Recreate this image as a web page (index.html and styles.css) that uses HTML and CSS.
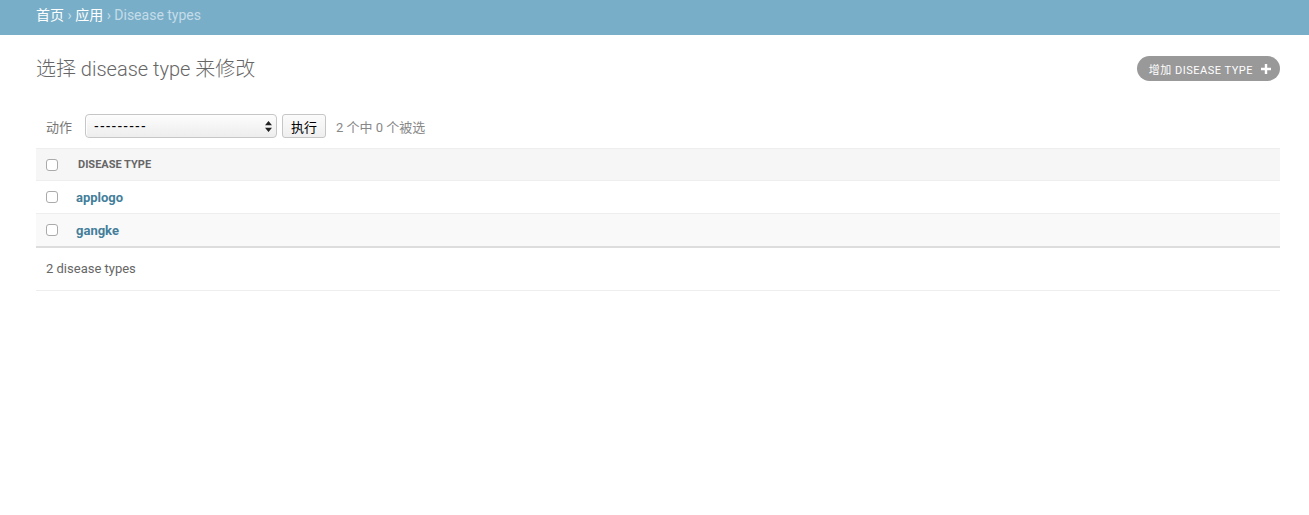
FILE: index.html
```html
<!DOCTYPE html>
<html lang="zh-hans">
<head>
    <meta charset="UTF-8">
    <title>选择 disease type 来修改</title>
    <link rel="stylesheet" href="styles.css">
</head>
<body>
    <div class="breadcrumbs">
        <a href="#">首页</a> &rsaquo; <a href="#">应用</a> &rsaquo; Disease types
    </div>

    <div class="content">
        <div class="page-head">
            <h1>选择 disease type 来修改</h1>
            <a href="#" class="addlink">增加 disease type
                <svg width="10" height="10" viewBox="0 0 10 10"><path d="M3.8 0h2.4v3.8H10v2.4H6.2V10H3.8V6.2H0V3.8h3.8z" fill="#fff"/></svg>
            </a>
        </div>

        <div class="actions">
            <label>动作</label>
            <span class="select-wrap">
                <select>
                    <option>---------</option>
                </select>
                <svg class="arrows" width="7" height="11" viewBox="0 0 7 11"><path d="M3.5 0L7 4.3H0zM3.5 11L0 6.7h7z" fill="#222"/></svg>
            </span>
            <button class="go">执行</button>
            <span class="counter">2 个中 0 个被选</span>
        </div>

        <table class="result-list">
            <thead>
                <tr>
                    <th class="check"><input type="checkbox"></th>
                    <th class="title">Disease type</th>
                </tr>
            </thead>
            <tbody>
                <tr class="row1">
                    <td class="check"><input type="checkbox"></td>
                    <td><a href="#">applogo</a></td>
                </tr>
                <tr class="row2">
                    <td class="check"><input type="checkbox"></td>
                    <td><a href="#">gangke</a></td>
                </tr>
            </tbody>
        </table>

        <p class="paginator">2 disease types</p>
    </div>
</body>
</html>
```

FILE: styles.css
```css
body {
    margin: 0;
    font-family: Roboto, "Noto Sans CJK SC", sans-serif;
    font-size: 14px;
    color: #333;
    background: #fff;
}

a {
    text-decoration: none;
}

.breadcrumbs {
    background: #79aec8;
    padding: 8px 36px 12px;
    height: 15px;
    line-height: 15px;
    font-size: 14px;
    color: #c4dce8;
}

.breadcrumbs a {
    color: #fff;
}

.content {
    padding: 22px 29px 20px 36px;
}

.page-head {
    display: flex;
    justify-content: space-between;
    align-items: flex-start;
}

h1 {
    margin: 0;
    font-size: 20px;
    line-height: 24px;
    font-weight: 300;
    color: #666;
}

.addlink {
    display: flex;
    align-items: center;
    gap: 8px;
    height: 25px;
    margin-top: -1px;
    padding: 0 9px 0 12px;
    background: #999;
    border-radius: 13px;
    color: #fff;
    font-size: 11px;
    text-transform: uppercase;
    letter-spacing: 0.5px;
}

.actions {
    display: flex;
    align-items: center;
    height: 24px;
    margin-top: 24px;
    padding: 9px 10px 10px;
    font-size: 13px;
    color: #777;
}

.actions label {
    margin-right: 13px;
}

.select-wrap {
    position: relative;
    display: inline-block;
}

.select-wrap select {
    -webkit-appearance: none;
    appearance: none;
    width: 192px;
    height: 24px;
    padding: 0 0 0 8px;
    border: 1px solid #c6c6c6;
    border-radius: 4px;
    background: linear-gradient(#fdfdfd, #ededed);
    font-family: "Liberation Sans", sans-serif;
    font-size: 14px;
    letter-spacing: 1.2px;
    color: #000;
    box-shadow: inset 1px 0 0 #fff;
}

.select-wrap .arrows {
    position: absolute;
    right: 5px;
    top: 7px;
    pointer-events: none;
}

.go {
    height: 24px;
    margin-left: 5px;
    padding: 0 8px;
    border: 1px solid #c6c6c6;
    border-radius: 3px;
    background: linear-gradient(#fbfbfb, #efefef);
    font-family: "Noto Sans CJK SC", sans-serif;
    font-size: 13px;
    color: #000;
}

.counter {
    margin-left: 10px;
    color: #888;
}

.result-list {
    width: 100%;
    border-collapse: collapse;
    border-bottom: 2px solid #ddd;
}

.result-list th,
.result-list td {
    height: 32px;
    padding: 0;
    text-align: left;
    vertical-align: middle;
}

.result-list th {
    height: 31px;
}

.result-list thead tr {
    background: #f6f6f6;
    border-top: 1px solid #eee;
    border-bottom: 1px solid #eee;
}

.result-list th.title {
    padding-left: 2px;
    font-size: 11px;
    font-weight: 700;
    text-transform: uppercase;
    color: #666;
}

.result-list .check {
    width: 30px;
    padding-left: 10px;
}

.result-list tbody tr {
    border-bottom: 1px solid #eee;
}

.result-list .row2 {
    background: #f9f9f9;
}

.result-list td a {
    font-size: 13px;
    font-weight: 700;
    color: #447e9b;
}

input[type="checkbox"] {
    -webkit-appearance: none;
    appearance: none;
    display: block;
    width: 12px;
    height: 12px;
    margin: 0;
    border: 1px solid #aaa;
    border-radius: 3px;
    background: #fff;
}

.paginator {
    margin: 0;
    padding: 0 10px;
    height: 42px;
    line-height: 42px;
    font-size: 13px;
    color: #666;
    border-bottom: 1px solid #eee;
}
```
